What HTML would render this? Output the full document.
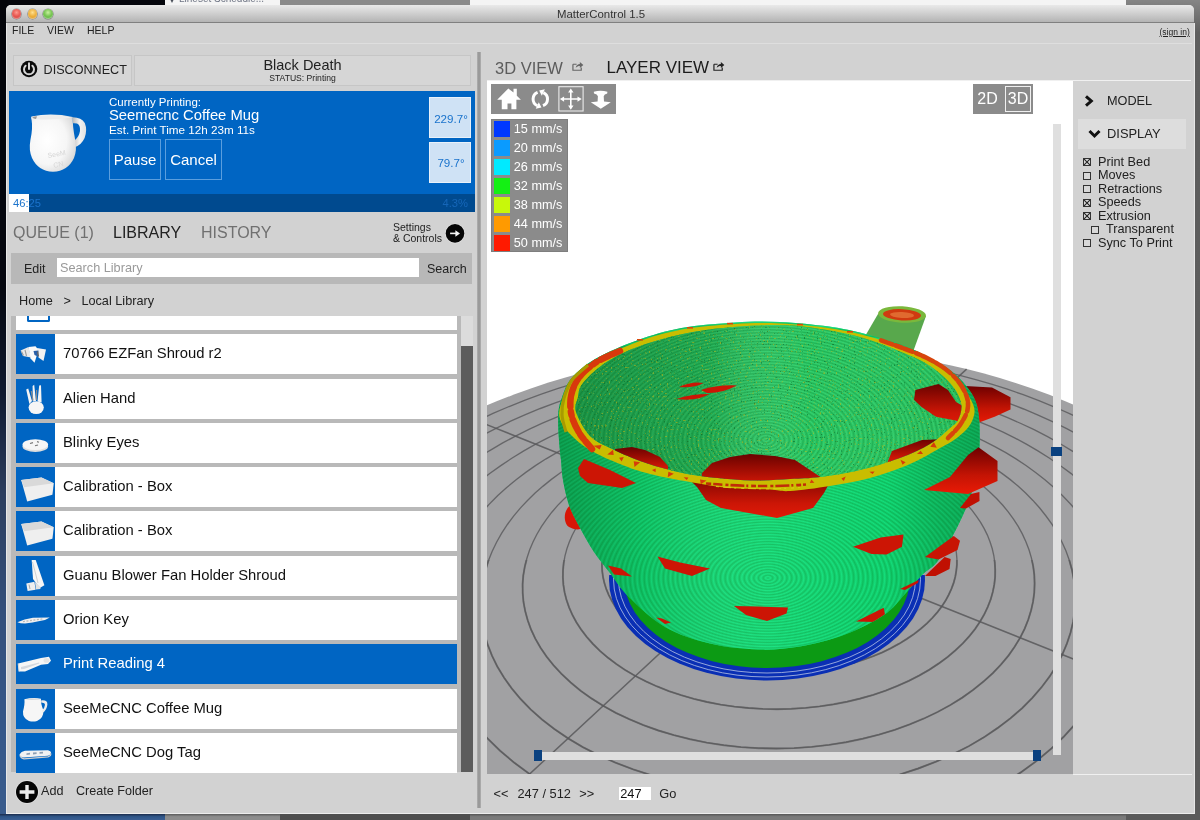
<!DOCTYPE html>
<html><head><meta charset="utf-8"><title>MatterControl 1.5</title>
<style>
*{box-sizing:border-box;margin:0;padding:0}
html,body{width:1200px;height:820px;overflow:hidden}
body{font-family:"Liberation Sans",sans-serif;background:#05060c;position:relative;color:#222}
.abs{position:absolute}
.t{position:absolute;white-space:pre;line-height:1}
/* desktop */
#desk-left{left:0;top:0;width:8px;height:820px;background:linear-gradient(#04050a 0%,#05070f 35%,#101a30 48%,#2c3e5e 60%,#34507c 75%,#36588a 90%,#3a5c8c 100%)}
#desk-bottom{left:0;top:812px;width:1200px;height:8px;background:#7b7b7b}
#win{left:6px;top:5.4px;width:1188.4px;height:808.6px;background:#d2d2d2;border-radius:5px 5px 0 0;overflow:hidden}
#titlebar{left:0;top:0;width:1189px;height:17.2px;background:linear-gradient(#e9e9e9,#d4d4d4 40%,#b4b4b4);border-bottom:1px solid #808080}
.tl{position:absolute;width:9.6px;height:9.6px;border-radius:50%;top:3.8px;box-shadow:0 0 0 .6px rgba(0,0,0,.35),inset 0 -1px 1.5px rgba(255,255,255,.5)}
/* list */
.row{position:absolute;left:16px;width:440.5px;height:39.5px;background:#fff}
.row .th{position:absolute;left:0;top:0;width:39px;height:39.5px;background:#0065c3}
.row .nm{position:absolute;left:47px;top:12.3px;font-size:14.8px;line-height:1;color:#111;white-space:pre}
.row.sel{background:#0065c3}.row.sel .nm{color:#fff}
.cb{position:absolute;font-size:12.7px;line-height:1;color:#222;white-space:pre}
.box{position:absolute;width:8px;height:8px;border:1px solid #333;background:#d8d8d8}
.lg{position:absolute;left:3.25px;width:16px;height:15.5px}
.lgt{position:absolute;left:22.8px;font-size:12.7px;line-height:1;color:#fff;white-space:pre}
#root{position:absolute;left:0;top:0;width:1200px;height:820px;will-change:transform;transform:translateZ(0)}
</style></head><body><div id="root">
<!-- desktop background pieces -->
<div class="abs" style="left:164.5px;top:0;width:115px;height:7px;background:#f4f4f4"></div>
<div class="abs" style="left:280px;top:0;width:190px;height:7px;background:#8a8a8a"></div>
<div class="abs" style="left:470px;top:0;width:656px;height:7px;background:#f4f4f4"></div>
<div class="abs" style="left:1126px;top:0;width:74px;height:820px;background:linear-gradient(#858585,#5e5e5e 4%,#5a5a5a)"></div>
<div class="abs" id="desk-left"></div>
<div class="abs" style="left:0;top:814px;width:165px;height:6px;background:linear-gradient(#1c2c4c,#2f5688 45%,#3a5e92)"></div>
<div class="abs" style="left:165px;top:814px;width:115px;height:6px;background:linear-gradient(#5a5a5a,#8c8c8c 45%)"></div>
<div class="abs" style="left:280px;top:814px;width:190px;height:6px;background:#4e4e4e"></div>
<div class="abs" style="left:470px;top:814px;width:656px;height:6px;background:linear-gradient(#555,#7a7a7a 45%)"></div>
<div class="abs" style="left:169.8px;top:-1.5px;width:0;height:0;border-left:2.3px solid transparent;border-right:2.3px solid transparent;border-top:4px solid #4a4f5a"></div><div class="t" style="left:179px;top:-6.2px;font-size:10px;color:#6e7484">Lineset Schedule...</div>

<div class="abs" id="win">
 <div class="abs" id="titlebar"></div>
 <div class="tl" style="left:5.7px;background:radial-gradient(circle at 50% 35%,#ff9a8f,#e0443e 60%,#b3261f)"></div>
 <div class="tl" style="left:21.5px;background:radial-gradient(circle at 50% 35%,#ffe08f,#e8a325 60%,#b97a12)"></div>
 <div class="tl" style="left:37.3px;background:radial-gradient(circle at 50% 35%,#c8f0a0,#5fb83a 60%,#3a8a22)"></div>
 <div class="t" style="left:1px;width:1188px;top:3.2px;text-align:center;font-size:11.4px;color:#333">MatterControl 1.5</div>
</div>

<!-- everything below uses page coordinates -->
<div class="t" style="left:12px;top:25px;font-size:10.5px;color:#222">FILE</div>
<div class="t" style="left:47px;top:25px;font-size:10.5px;color:#222">VIEW</div>
<div class="t" style="left:87px;top:25px;font-size:10.5px;color:#222">HELP</div>
<div class="t" style="left:1159.5px;top:27.7px;font-size:8.5px;color:#222;text-decoration:underline">(sign in)</div>
<div class="abs" style="left:9px;top:43px;width:1183px;height:1px;background:#dedede"></div>

<!-- top-left: disconnect + status -->
<div class="abs" style="left:13px;top:55px;width:119px;height:31px;border:1px solid #c6c6c6;background:#d6d6d6"></div>
<svg class="abs" style="left:19px;top:59.4px" width="20" height="20" viewBox="0 0 20 20"><circle cx="10" cy="10" r="8.3" fill="#0a0a0a"/><path d="M6.6 6.7A5 5 0 1 0 13.4 6.7" fill="none" stroke="#d6d6d6" stroke-width="2" stroke-linecap="round"/><path d="M10 4.2V10" stroke="#d6d6d6" stroke-width="2" stroke-linecap="round"/></svg>
<div class="t" style="left:43.6px;top:63.8px;font-size:12.6px;color:#222">DISCONNECT</div>
<div class="abs" style="left:134px;top:55px;width:337px;height:31px;border:1px solid #c6c6c6;background:#d6d6d6"></div>
<div class="t" style="left:134px;width:337px;top:58.4px;text-align:center;font-size:14.5px;color:#222">Black Death</div>
<div class="t" style="left:134px;width:337px;top:74px;text-align:center;font-size:8.6px;color:#222">STATUS: Printing</div>

<!-- blue print panel -->
<div class="abs" style="left:9px;top:91px;width:466px;height:103px;background:#0065c3"></div>
<div class="abs" style="left:9px;top:194px;width:466px;height:18px;background:#004a8f"></div>
<div class="abs" style="left:9px;top:194px;width:20px;height:18px;background:#fff"></div>
<div class="t" style="left:13px;top:197.6px;font-size:11.2px;color:#1a73cc">46:25</div>
<div class="t" style="left:442.5px;top:197.6px;font-size:11.2px;color:#1566b8">4.3%</div>
<div class="t" style="left:109px;top:96.6px;font-size:11.5px;color:#fff">Currently Printing:</div>
<div class="t" style="left:109px;top:108px;font-size:14.8px;color:#fff">Seemecnc Coffee Mug</div>
<div class="t" style="left:109px;top:124.3px;font-size:11.7px;color:#fff">Est. Print Time 12h 23m 11s</div>
<div class="abs" style="left:109px;top:139px;width:52px;height:41px;border:1px solid #5a9ede"></div>
<div class="t" style="left:109px;width:52px;top:151.6px;text-align:center;font-size:15px;color:#fff">Pause</div>
<div class="abs" style="left:165px;top:139px;width:57px;height:41px;border:1px solid #5a9ede"></div>
<div class="t" style="left:165px;width:57px;top:151.6px;text-align:center;font-size:15px;color:#fff">Cancel</div>
<div class="abs" style="left:429px;top:97px;width:42px;height:41px;background:#cfe2f5;border:1px solid #e8f1fa"></div>
<div class="t" style="left:430px;width:42px;top:113px;text-align:center;font-size:11.6px;color:#1a73cc">229.7&deg;</div>
<div class="abs" style="left:429px;top:142px;width:42px;height:41px;background:#cfe2f5;border:1px solid #e8f1fa"></div>
<div class="t" style="left:430px;width:42px;top:157px;text-align:center;font-size:11.6px;color:#1a73cc">79.7&deg;</div>
<svg class="abs" style="left:26px;top:108px" width="64" height="66" viewBox="0 0 64 66">
<defs><radialGradient id="mg" cx="38%" cy="45%" r="70%"><stop offset="0" stop-color="#ffffff"/><stop offset=".6" stop-color="#f6f6f6"/><stop offset=".9" stop-color="#dcdcdc"/><stop offset="1" stop-color="#c4c4c4"/></radialGradient>
<linearGradient id="mh" x1="0" y1="0" x2="1" y2="0"><stop offset="0" stop-color="#bdbdbd"/><stop offset=".5" stop-color="#f2f2f2"/><stop offset="1" stop-color="#e0e0e0"/></linearGradient></defs>
<path d="M46.8 9.2Q55.5 9.3 58.8 15Q61.6 22 58.6 30Q55.6 36.5 49.3 39L48.8 32.2Q53 29 54 23Q54.4 17 51 15.6Q49 15 47.1 15.2Z" fill="url(#mh)"/>
<path d="M5.4 8.4Q4.6 9.2 5.6 12Q7 20 4.4 32Q2.6 42 6 50Q12 63 27 63.8Q42 63 48 50Q51.2 42 49.2 32Q46.4 18 46.8 9Q26 4.4 5.4 8.4Z" fill="url(#mg)"/>
<path d="M6 9.2Q26 5.4 46.4 9.4Q26 12.6 9 11Z" fill="#ececec"/>
<path d="M6.2 9.4Q8.5 8.4 11 8.3L10 11Q7.5 10.8 6.2 9.4Z" fill="#9a9a9a"/>
<text x="22" y="50" font-family="Liberation Sans" font-size="7" fill="#d6d6d6" transform="rotate(-10 22 50)">SeeM</text>
<text x="28" y="60" font-family="Liberation Sans" font-size="7" fill="#d6d6d6" transform="rotate(-14 28 60)">CN</text>
</svg>

<!-- tabs -->
<div class="t" style="left:13px;top:225px;font-size:16px;color:#707070">QUEUE (1)</div>
<div class="t" style="left:113px;top:225px;font-size:16px;color:#222">LIBRARY</div>
<div class="t" style="left:201px;top:225px;font-size:16px;color:#707070">HISTORY</div>
<div class="t" style="left:393px;top:222.4px;font-size:10.5px;color:#222">Settings</div>
<div class="t" style="left:393px;top:233.3px;font-size:10.5px;color:#222">&amp; Controls</div>
<svg class="abs" style="left:445px;top:223px" width="20" height="21" viewBox="0 0 20 21"><circle cx="10" cy="10.4" r="10" fill="#e4e4e4"/><circle cx="10" cy="10.4" r="9.3" fill="#050505"/><path d="M5.1 10.4H11.5" stroke="#f4f4f4" stroke-width="1.6"/><path d="M10.4 7.2L15 10.4L10.4 13.7Z" fill="#f4f4f4"/></svg>

<!-- search row -->
<div class="abs" style="left:11px;top:253px;width:461px;height:31px;background:#b8b8b8"></div>
<div class="t" style="left:24px;top:263px;font-size:12.5px;color:#222">Edit</div>
<div class="abs" style="left:57px;top:258px;width:362px;height:19px;background:#fff"></div>
<div class="t" style="left:60px;top:261.8px;font-size:12.7px;color:#9a9a9a">Search Library</div>
<div class="t" style="left:427px;top:263px;font-size:12.5px;color:#222">Search</div>
<div class="t" style="left:19px;top:294.6px;font-size:12.7px;color:#222">Home   &gt;   Local Library</div>

<!-- list -->
<div class="abs" style="left:11px;top:316px;width:450px;height:456px;background:#b9b9b9"></div>
<div class="abs" style="left:16px;top:316px;width:440.5px;height:14px;background:#fff"></div>
<div class="abs" style="left:26.5px;top:316px;width:23.5px;height:5.5px;border:2px solid #0065c3;border-top:none;border-radius:0 0 2px 2px"></div>
<div class="row" style="top:334px"><div class="th"><svg width="40" height="40" viewBox="0 0 40 40" style="position:absolute;left:0;top:0"><path d="M4.6 16.5L12.5 13L15 23.5L7 22Z" fill="#e9e9e9"/><path d="M12.5 13L19.5 12.2L22.5 16L18.5 28.8L14.5 24.5Z" fill="#fafafa"/><path d="M21 14L30 15.5L27.5 27L22.5 23.5Z" fill="#f2f2f2"/><path d="M17.5 17L22.5 16.5L22 22.5L18.5 21Z" fill="#2a5fa8"/><path d="M5.5 17.5L7.5 21.5M9 16L10.5 22" stroke="#9a9a9a" stroke-width="1.1"/><path d="M21.5 17.5L22.5 22.5" stroke="#666" stroke-width="1.3"/></svg></div><div class="nm">70766 EZFan Shroud r2</div></div>
<div class="row" style="top:379px"><div class="th"><svg width="40" height="40" viewBox="0 0 40 40" style="position:absolute;left:0;top:0"><ellipse cx="20.2" cy="28.6" rx="7.6" ry="6.4" fill="#f6f6f6"/><path d="M13.4 25L10.2 10.5L12.2 9.4L16 22ZM16.8 22.5L16.6 7L18.2 5.8L20 22ZM21.5 22.5L23.2 6.5L25 6.2L25.6 23.5Z" fill="#f4f4f4"/><path d="M15.3 12L17 21.5M20.6 11L20.4 21" stroke="#8a8a8a" stroke-width="1.2"/></svg></div><div class="nm">Alien Hand</div></div>
<div class="row" style="top:423px"><div class="th"><svg width="40" height="40" viewBox="0 0 40 40" style="position:absolute;left:0;top:0"><ellipse cx="19.3" cy="23.4" rx="12.8" ry="5.6" fill="#dedede"/><ellipse cx="19.3" cy="21.6" rx="12.8" ry="5.4" fill="#f6f6f6"/><path d="M14 20.5L17 19.6M19 22.8L22 22M21 18.6L23 19.2" stroke="#777" stroke-width="1.1"/></svg></div><div class="nm">Blinky Eyes</div></div>
<div class="row" style="top:467px"><div class="th"><svg width="40" height="40" viewBox="0 0 40 40" style="position:absolute;left:0;top:0"><path d="M5.2 13L25.5 10.5L37.8 16.2L36.4 27.8L11.2 34.4Z" fill="#efefef"/><path d="M5.2 13L25.5 10.5L37.8 16.2L8 20.2Z" fill="#d9d9d9"/></svg></div><div class="nm">Calibration - Box</div></div>
<div class="row" style="top:511px"><div class="th"><svg width="40" height="40" viewBox="0 0 40 40" style="position:absolute;left:0;top:0"><path d="M5.2 13L25.5 10.5L37.8 16.2L36.4 27.8L11.2 34.4Z" fill="#efefef"/><path d="M5.2 13L25.5 10.5L37.8 16.2L8 20.2Z" fill="#d9d9d9"/></svg></div><div class="nm">Calibration - Box</div></div>
<div class="row" style="top:556px"><div class="th"><svg width="40" height="40" viewBox="0 0 40 40" style="position:absolute;left:0;top:0"><path d="M15.7 4L19.7 4L28.4 29.2L23.8 31.9L17 23Z" fill="#f6f6f6"/><path d="M10.3 27.6L18.4 25.7L19.7 33.8L11.6 35Z" fill="#efefef"/><path d="M19 26L24 30.5L24.5 33L20 33.6Z" fill="#e2e2e2"/><path d="M16.5 6L22 27" stroke="#d0d0d0" stroke-width="1"/><path d="M13 28.5L14 33" stroke="#aaa" stroke-width="1"/></svg></div><div class="nm">Guanu Blower Fan Holder Shroud</div></div>
<div class="row" style="top:600px"><div class="th"><svg width="40" height="40" viewBox="0 0 40 40" style="position:absolute;left:0;top:0"><path d="M1.4 22.2Q8 19 17 17.8L33.8 17.4Q30 20 25 20.8Q16 23 9 23.6Q4 23.6 1.4 22.2Z" fill="#f0f0f0"/><path d="M7 21.6L27 18.8" stroke="#b8b8b8" stroke-width="1.1" stroke-dasharray="2 1.5"/></svg></div><div class="nm">Orion Key</div></div>
<div class="row sel" style="top:644px"><div class="th"><svg width="40" height="40" viewBox="0 0 40 40" style="position:absolute;left:0;top:0"><path d="M2.2 19.5L25 14L33 12.7L35 16.8L32 20L25 20.8L9 27.6L3 27.6Z" fill="#f6f6f6"/><path d="M5 23L23 18.4L23.4 19.6L8 25L5 25.2Z" fill="#d4d8de"/><ellipse cx="30.5" cy="16.4" rx="3" ry="2.4" fill="#e4e4e4"/><path d="M2.2 19.5L3 27.6" stroke="#ddd" stroke-width="1"/></svg></div><div class="nm">Print Reading 4</div></div>
<div class="row" style="top:689px"><div class="th"><svg width="40" height="40" viewBox="0 0 40 40" style="position:absolute;left:0;top:0"><path d="M8.4 10.3Q17 8 25 9.7Q24.5 14 27.3 21Q28 29 21 32Q17 33 13 32Q6.5 29 7 22.4Q9 15 8.4 10.3Z" fill="#f6f6f6"/><path d="M25 11.4Q31.6 10.6 31.4 15.5Q30.8 21 26.8 24L26 21.4Q28.8 19 29 15.8Q28.8 13.2 25.4 13.8Z" fill="#ededed"/><path d="M9 10.6Q17 8.8 24.6 10.2Q17 11.6 9 10.6Z" fill="#d8d8d8"/></svg></div><div class="nm">SeeMeCNC Coffee Mug</div></div>
<div class="row" style="top:733px"><div class="th"><svg width="40" height="40" viewBox="0 0 40 40" style="position:absolute;left:0;top:0"><path d="M3.5 21.4Q5 18.4 9 17.8L32 17.3Q35.4 18 35 20Q34.6 22 32 22.7L7.6 24.6Q4 24.2 3.5 21.4Z" fill="#f2f2f2"/><path d="M10.5 20.2L14 19.8L14 21.6L10.5 22ZM17 19.6L20.6 19.3L20.6 21L17 21.4ZM23.5 19L27 18.8L27 20.4L23.5 20.8Z" fill="#8fa0b4"/><path d="M3.8 22.4Q5 25.6 8 25.8L32 23.8Q35 23 35 20.4" stroke="#cfcfcf" stroke-width="1.2" fill="none"/></svg></div><div class="nm">SeeMeCNC Dog Tag</div></div>
<div class="abs" style="left:461px;top:316px;width:12px;height:30px;background:#dcdcdc"></div>
<div class="abs" style="left:461px;top:346px;width:12px;height:426px;background:#5c5c5c"></div>

<!-- bottom-left -->
<svg class="abs" style="left:15.15px;top:779.5px" width="24" height="24" viewBox="0 0 24 24"><circle cx="12" cy="12" r="11.8" fill="#e2e2e2"/><circle cx="12" cy="12" r="11" fill="#050505"/><path d="M12 5V19M4.6 12H19.4" stroke="#ececec" stroke-width="3.4"/></svg>
<div class="t" style="left:41px;top:785px;font-size:12.6px;color:#222">Add</div>
<div class="t" style="left:76px;top:785px;font-size:12.6px;color:#222">Create Folder</div>

<!-- splitter -->
<div class="abs" style="left:477.2px;top:52px;width:3.5px;height:756px;background:linear-gradient(90deg,#b4b4b4,#9a9a9a 30%,#9a9a9a 70%,#b4b4b4)"></div>

<!-- right tabs -->
<div class="t" style="left:495px;top:59.5px;font-size:16.5px;color:#5c5c5c">3D VIEW</div>
<div class="t" style="left:606.5px;top:59.4px;font-size:17px;color:#1c1c1c">LAYER VIEW</div>
<svg class="abs" style="left:572px;top:61px" width="12" height="10.2" viewBox="0 0 13 11"><path d="M1 3.5H5M1 3.5V10H10V7" fill="none" stroke="#666" stroke-width="1.3"/><path d="M4 7.5C4.5 4.5 6.5 3.3 8.5 3.3V1L12.3 4.3L8.5 7.6V5.4C6.8 5.4 5.3 6 4 7.5Z" fill="#666"/></svg>
<svg class="abs" style="left:712.6px;top:61px" width="12" height="10.2" viewBox="0 0 13 11"><path d="M1 3.5H5M1 3.5V10H10V7" fill="none" stroke="#222" stroke-width="1.3"/><path d="M4 7.5C4.5 4.5 6.5 3.3 8.5 3.3V1L12.3 4.3L8.5 7.6V5.4C6.8 5.4 5.3 6 4 7.5Z" fill="#222"/></svg>
<div class="abs" style="left:487px;top:80px;width:704px;height:1px;background:#f0f0f0"></div>

<!-- view area -->
<div class="abs" style="left:487px;top:81px;width:586px;height:693px;background:#fff;overflow:hidden">
<svg width="586" height="693" viewBox="487 81 586 693" style="position:absolute;left:0;top:0">
<defs>
<radialGradient id="gi" gradientUnits="userSpaceOnUse" cx="0" cy="0" r="1.45" spreadMethod="reflect" gradientTransform="translate(766 440) scale(1.6 1)"><stop offset="0" stop-color="#1aa84c"/><stop offset="1" stop-color="#3cdc7a"/></radialGradient>
<radialGradient id="gb" gradientUnits="userSpaceOnUse" cx="0" cy="0" r="1.4" spreadMethod="reflect" gradientTransform="translate(768 578) scale(1.7 1)"><stop offset="0" stop-color="#0eb858"/><stop offset="1" stop-color="#16ea86"/></radialGradient>
<linearGradient id="shadeL" gradientUnits="userSpaceOnUse" x1="558" y1="0" x2="980" y2="0"><stop offset="0" stop-color="#003a10" stop-opacity=".36"/><stop offset=".2" stop-color="#003a10" stop-opacity=".12"/><stop offset=".5" stop-color="#fff" stop-opacity=".04"/><stop offset=".78" stop-color="#003a10" stop-opacity=".03"/><stop offset=".9" stop-color="#003a10" stop-opacity=".2"/><stop offset="1" stop-color="#003a10" stop-opacity=".3"/></linearGradient>
<linearGradient id="shadeI" gradientUnits="userSpaceOnUse" x1="577" y1="0" x2="963" y2="0"><stop offset="0" stop-color="#003a10" stop-opacity=".36"/><stop offset=".35" stop-color="#003a10" stop-opacity=".18"/><stop offset=".6" stop-color="#fff" stop-opacity="0"/><stop offset="1" stop-color="#003a10" stop-opacity=".05"/></linearGradient>
<linearGradient id="rd" x1="0" y1="0" x2="0" y2="1"><stop offset="0" stop-color="#6e0000"/><stop offset=".6" stop-color="#c41404"/><stop offset="1" stop-color="#ea1a06"/></linearGradient>
<linearGradient id="rd2" x1="0" y1="0" x2="0" y2="1"><stop offset="0" stop-color="#6a0200"/><stop offset=".7" stop-color="#cc1606"/><stop offset="1" stop-color="#e01a08"/></linearGradient>
<filter id="spk" x="0" y="0" width="100%" height="100%" color-interpolation-filters="sRGB"><feTurbulence type="fractalNoise" baseFrequency="0.55" numOctaves="1" seed="7" result="n"/><feColorMatrix in="n" type="matrix" values="0 0 0 0 0.82  0 0 0 0 0.72  0 0 0 0 0.05  9 0 0 0 -5.6"/></filter>
<filter id="spk2" x="0" y="0" width="100%" height="100%" color-interpolation-filters="sRGB"><feTurbulence type="fractalNoise" baseFrequency="0.7" numOctaves="1" seed="11" result="n"/><feColorMatrix in="n" type="matrix" values="0 0 0 0 0.02  0 0 0 0 0.35  0 0 0 0 0.12  0 8 0 0 -5.1"/></filter>
<clipPath id="cint"><path d="M576.0 412.0 C574.0 405.7 576.6 402.8 577.8 398.0 C579.0 393.2 577.9 389.2 583.0 383.0 C588.1 376.8 597.2 367.7 608.3 361.0 C619.4 354.3 632.7 348.0 649.8 342.7 C666.9 337.4 689.0 332.2 710.7 329.3 C732.4 326.4 760.1 324.8 780.0 325.0 C799.9 325.2 815.3 328.1 830.0 330.5 C844.7 332.9 855.5 335.7 868.0 339.5 C880.5 343.3 895.3 349.5 905.0 353.5 C914.7 357.5 919.5 359.6 926.0 363.5 C932.5 367.4 939.0 372.4 944.0 377.0 C949.0 381.6 953.1 386.2 956.0 391.0 C958.9 395.8 961.2 401.2 961.5 406.0 C961.8 410.8 959.9 416.3 958.0 420.0 C956.1 423.7 954.7 424.0 950.0 428.0 C945.3 432.0 938.3 439.0 930.0 444.0 C921.7 449.0 911.7 453.7 900.0 458.0 C888.3 462.3 873.3 466.8 860.0 470.0 C846.7 473.2 831.7 475.5 820.0 477.0 C808.3 478.5 801.7 478.4 790.0 479.0 C778.3 479.6 765.0 481.0 750.0 480.5 C735.0 480.0 713.3 477.8 700.0 476.0 C686.7 474.2 680.0 472.5 670.0 470.0 C660.0 467.5 650.0 464.7 640.0 461.0 C630.0 457.3 618.3 452.2 610.0 448.0 C601.7 443.8 595.7 442.0 590.0 436.0 C584.3 430.0 578.0 418.3 576.0 412.0Z"/></clipPath>
<clipPath id="cbody"><path d="M558.3 414.0 C557.8 421.1 558.5 432.3 559.0 440.0 C559.5 447.7 560.3 453.3 561.0 460.0 C561.7 466.7 561.7 472.5 563.0 480.0 C564.3 487.5 566.3 497.3 569.0 505.0 C571.7 512.7 574.8 518.2 579.0 526.0 C583.2 533.8 588.8 544.2 594.0 552.0 C599.2 559.8 604.2 565.5 610.0 573.0 C615.8 580.5 619.8 588.0 629.0 597.0 C638.2 606.0 651.5 619.2 665.0 627.0 C678.5 634.8 694.5 639.8 710.0 643.5 C725.5 647.2 743.0 649.0 758.0 649.5 C773.0 650.0 785.5 649.0 800.0 646.5 C814.5 644.0 831.0 639.8 845.0 634.5 C859.0 629.2 874.0 621.8 884.0 615.0 C894.0 608.2 898.7 600.7 905.0 594.0 C911.3 587.3 916.7 580.3 922.0 575.0 C927.3 569.7 932.0 568.3 937.0 562.0 C942.0 555.7 947.7 544.8 952.0 537.0 C956.3 529.2 959.8 522.0 963.0 515.0 C966.2 508.0 968.7 502.5 971.0 495.0 C973.3 487.5 975.6 478.2 977.0 470.0 C978.4 461.8 979.2 454.7 979.5 446.0 C979.8 437.3 979.8 425.7 979.0 418.0 C978.2 410.3 977.3 405.5 975.0 400.0 C972.7 394.5 969.4 389.9 965.4 385.0 C961.4 380.1 957.2 375.4 950.7 370.5 C944.2 365.6 934.4 360.1 926.3 355.9 C918.2 351.6 912.1 348.6 902.0 345.0 C891.9 341.4 877.6 337.1 865.4 334.0 C853.2 330.9 843.0 328.6 828.8 326.6 C814.6 324.6 795.6 322.7 780.0 322.0 C764.4 321.3 751.4 321.4 735.0 322.4 C718.6 323.4 697.7 325.0 681.5 328.0 C665.3 331.0 651.9 335.1 637.6 340.2 C623.4 345.3 607.0 352.2 596.0 358.5 C585.0 364.8 577.4 371.5 571.7 378.0 C566.0 384.5 564.2 391.6 562.0 397.6 C559.8 403.6 558.8 406.9 558.3 414.0Z"/></clipPath>
</defs>
<path d="M1351.4 770.1 L1349.3 796.6 L1344.8 823.8 L1337.5 851.7 L1327.3 880.1 L1313.9 908.8 L1297.2 937.7 L1277.0 966.5 L1253.1 995.0 L1225.3 1022.8 L1193.8 1049.5 L1158.4 1074.9 L1119.3 1098.6 L1076.7 1120.2 L1030.8 1139.3 L982.1 1155.6 L930.9 1168.7 L877.7 1178.4 L823.3 1184.5 L768.2 1186.8 L713.1 1185.3 L658.7 1180.1 L605.6 1171.2 L554.5 1158.8 L505.8 1143.1 L460.0 1124.6 L417.6 1103.4 L378.7 1080.1 L343.6 1054.9 L312.4 1028.2 L285.2 1000.5 L261.8 972.0 L242.1 943.1 L226.1 914.0 L213.5 885.0 L204.1 856.3 L197.7 828.1 L194.1 800.6 L192.9 773.8 L194.1 747.9 L197.3 722.9 L202.4 698.8 L209.1 675.7 L217.3 653.7 L226.8 632.6 L237.4 612.6 L249.0 593.6 L261.5 575.5 L274.7 558.4 L288.6 542.2 L303.0 526.8 L317.9 512.4 L333.2 498.7 L348.9 485.9 L364.8 473.8 L380.9 462.5 L397.3 451.8 L413.8 441.8 L430.5 432.4 L447.2 423.7 L464.0 415.5 L480.9 407.9 L497.8 400.8 L514.7 394.3 L531.6 388.2 L548.5 382.6 L565.5 377.5 L582.4 372.8 L599.3 368.6 L616.2 364.7 L633.0 361.3 L649.9 358.2 L666.7 355.6 L683.5 353.3 L700.2 351.4 L717.0 349.8 L733.7 348.6 L750.4 347.8 L767.1 347.3 L783.7 347.1 L800.4 347.3 L817.0 347.9 L833.7 348.8 L850.3 350.0 L866.9 351.6 L883.6 353.6 L900.2 355.9 L916.8 358.6 L933.4 361.7 L950.0 365.2 L966.6 369.1 L983.2 373.3 L999.8 378.0 L1016.4 383.2 L1032.9 388.8 L1049.4 394.8 L1065.9 401.4 L1082.3 408.4 L1098.7 416.0 L1115.0 424.1 L1131.1 432.9 L1147.2 442.2 L1163.0 452.1 L1178.7 462.7 L1194.2 473.9 L1209.4 485.9 L1224.3 498.6 L1238.8 512.1 L1252.8 526.4 L1266.4 541.6 L1279.4 557.6 L1291.7 574.5 L1303.2 592.3 L1313.9 611.1 L1323.5 630.9 L1332.0 651.6 L1339.2 673.4 L1344.9 696.1 L1349.0 719.8 L1351.2 744.5Z" fill="#a1a1a3"/>
<defs><path id="rg" d="M805.4 551.9 L804.5 552.8 L803.6 553.5 L802.5 554.3 L801.4 555.0 L800.3 555.7 L799.1 556.4 L797.8 557.0 L796.5 557.6 L795.2 558.1 L793.8 558.6 L792.3 559.0 L790.8 559.4 L789.3 559.7 L787.8 560.0 L786.2 560.3 L784.6 560.4 L783.0 560.6 L781.4 560.7 L779.8 560.7 L778.2 560.7 L776.6 560.6 L775.0 560.5 L773.4 560.3 L771.8 560.0 L770.3 559.7 L768.8 559.4 L767.3 559.0 L765.9 558.6 L764.5 558.1 L763.2 557.6 L761.9 557.0 L760.6 556.4 L759.5 555.7 L758.3 555.1 L757.3 554.3 L756.3 553.6 L755.4 552.8 L754.5 552.0 L753.7 551.1 L753.0 550.3 L752.4 549.4 L751.9 548.5 L751.4 547.6 L751.0 546.6 L750.7 545.7 L750.5 544.7 L750.4 543.8 L750.3 542.8 L750.3 541.9 L750.5 540.9 L750.6 540.0 L750.9 539.0 L751.3 538.1 L751.7 537.2 L752.2 536.3 L752.8 535.4 L753.4 534.6 L754.1 533.7 L754.9 532.9 L755.8 532.1 L756.7 531.4 L757.7 530.6 L758.7 529.9 L759.8 529.3 L760.9 528.6 L762.1 528.1 L763.3 527.5 L764.6 527.0 L765.9 526.5 L767.3 526.1 L768.7 525.7 L770.1 525.3 L771.5 525.0 L773.0 524.8 L774.5 524.6 L775.9 524.4 L777.4 524.3 L779.0 524.2 L780.5 524.2 L782.0 524.2 L783.5 524.3 L785.0 524.4 L786.5 524.6 L787.9 524.8 L789.4 525.0 L790.8 525.3 L792.2 525.7 L793.6 526.1 L794.9 526.5 L796.2 527.0 L797.5 527.5 L798.7 528.0 L799.8 528.6 L801.0 529.2 L802.0 529.9 L803.0 530.6 L804.0 531.3 L804.9 532.1 L805.7 532.9 L806.4 533.7 L807.1 534.5 L807.7 535.4 L808.3 536.3 L808.7 537.2 L809.1 538.1 L809.5 539.0 L809.7 539.9 L809.8 540.9 L809.9 541.8 L809.9 542.8 L809.8 543.7 L809.6 544.7 L809.4 545.6 L809.1 546.6 L808.6 547.5 L808.1 548.4 L807.6 549.3 L806.9 550.2 L806.2 551.1ZM837.2 564.7 L835.3 566.6 L833.3 568.4 L831.0 570.2 L828.7 571.9 L826.1 573.5 L823.4 575.0 L820.6 576.5 L817.7 577.8 L814.6 579.1 L811.4 580.2 L808.1 581.3 L804.7 582.2 L801.2 583.0 L797.7 583.7 L794.1 584.3 L790.4 584.7 L786.8 585.0 L783.1 585.2 L779.3 585.3 L775.6 585.3 L771.9 585.1 L768.2 584.7 L764.6 584.3 L761.0 583.7 L757.5 583.1 L754.1 582.2 L750.7 581.3 L747.4 580.3 L744.3 579.1 L741.2 577.9 L738.3 576.5 L735.6 575.1 L732.9 573.6 L730.4 571.9 L728.1 570.3 L726.0 568.5 L724.0 566.7 L722.1 564.8 L720.5 562.8 L719.0 560.8 L717.8 558.8 L716.7 556.7 L715.8 554.6 L715.0 552.5 L714.5 550.4 L714.1 548.3 L714.0 546.1 L714.0 544.0 L714.2 541.9 L714.6 539.8 L715.1 537.7 L715.8 535.7 L716.7 533.6 L717.8 531.6 L719.0 529.7 L720.4 527.8 L721.9 525.9 L723.6 524.2 L725.4 522.4 L727.3 520.7 L729.4 519.1 L731.6 517.6 L733.9 516.1 L736.3 514.7 L738.8 513.4 L741.4 512.2 L744.1 511.0 L746.9 510.0 L749.7 509.0 L752.6 508.1 L755.6 507.3 L758.7 506.6 L761.7 506.0 L764.9 505.5 L768.0 505.0 L771.2 504.7 L774.4 504.4 L777.6 504.3 L780.8 504.3 L784.0 504.3 L787.3 504.4 L790.4 504.7 L793.6 505.0 L796.8 505.4 L799.9 506.0 L802.9 506.6 L805.9 507.3 L808.9 508.1 L811.7 509.0 L814.6 510.0 L817.3 511.0 L819.9 512.2 L822.5 513.4 L825.0 514.7 L827.3 516.1 L829.5 517.6 L831.7 519.1 L833.7 520.7 L835.5 522.4 L837.3 524.1 L838.9 525.9 L840.3 527.7 L841.6 529.6 L842.8 531.6 L843.8 533.6 L844.6 535.6 L845.2 537.6 L845.7 539.7 L846.0 541.8 L846.1 543.9 L846.1 546.1 L845.8 548.2 L845.4 550.3 L844.8 552.4 L844.0 554.5 L843.0 556.6 L841.8 558.7 L840.5 560.7 L838.9 562.7ZM870.5 578.0 L867.7 581.0 L864.6 584.0 L861.2 586.9 L857.5 589.7 L853.6 592.4 L849.4 594.9 L845.0 597.3 L840.3 599.5 L835.5 601.6 L830.4 603.6 L825.2 605.3 L819.7 606.9 L814.2 608.2 L808.5 609.4 L802.7 610.4 L796.8 611.1 L790.8 611.7 L784.9 612.0 L778.8 612.1 L772.8 612.0 L766.8 611.7 L760.9 611.2 L755.0 610.4 L749.3 609.5 L743.6 608.3 L738.1 607.0 L732.7 605.4 L727.5 603.7 L722.5 601.8 L717.7 599.7 L713.1 597.5 L708.8 595.1 L704.7 592.5 L700.9 589.9 L697.3 587.1 L694.0 584.2 L691.0 581.2 L688.3 578.1 L685.8 575.0 L683.7 571.8 L681.9 568.5 L680.4 565.2 L679.2 561.9 L678.2 558.6 L677.6 555.2 L677.3 551.9 L677.2 548.5 L677.5 545.2 L678.0 541.9 L678.8 538.7 L679.9 535.5 L681.2 532.3 L682.7 529.2 L684.6 526.2 L686.6 523.2 L688.9 520.4 L691.4 517.6 L694.1 514.9 L696.9 512.3 L700.0 509.8 L703.3 507.4 L706.7 505.2 L710.3 503.0 L714.0 501.0 L717.9 499.0 L721.9 497.2 L726.0 495.6 L730.2 494.0 L734.5 492.6 L738.9 491.3 L743.4 490.1 L748.0 489.1 L752.6 488.2 L757.3 487.4 L762.0 486.8 L766.8 486.3 L771.6 486.0 L776.4 485.8 L781.2 485.7 L786.0 485.8 L790.8 486.0 L795.5 486.3 L800.3 486.8 L805.0 487.4 L809.6 488.2 L814.2 489.1 L818.7 490.1 L823.2 491.3 L827.5 492.6 L831.8 494.0 L835.9 495.5 L840.0 497.2 L843.9 499.0 L847.7 500.9 L851.3 503.0 L854.8 505.1 L858.1 507.4 L861.3 509.8 L864.3 512.3 L867.1 514.9 L869.6 517.5 L872.0 520.3 L874.2 523.2 L876.1 526.1 L877.8 529.1 L879.2 532.2 L880.4 535.4 L881.4 538.5 L882.0 541.8 L882.4 545.1 L882.6 548.4 L882.4 551.7 L881.9 555.1 L881.2 558.4 L880.2 561.7 L878.8 565.1 L877.2 568.4 L875.2 571.6 L873.0 574.8ZM905.3 591.9 L901.6 596.2 L897.6 600.5 L893.1 604.6 L888.2 608.6 L882.9 612.5 L877.2 616.2 L871.1 619.6 L864.7 622.9 L858.0 626.0 L851.0 628.8 L843.6 631.4 L836.1 633.7 L828.2 635.7 L820.2 637.4 L812.1 638.8 L803.7 640.0 L795.3 640.8 L786.8 641.3 L778.3 641.5 L769.8 641.3 L761.3 640.8 L752.9 640.1 L744.6 639.0 L736.5 637.5 L728.5 635.8 L720.7 633.8 L713.2 631.6 L706.0 629.0 L699.0 626.2 L692.4 623.2 L686.1 619.9 L680.1 616.4 L674.6 612.8 L669.4 608.9 L664.6 604.9 L660.2 600.8 L656.3 596.5 L652.8 592.2 L649.7 587.7 L647.0 583.2 L644.8 578.6 L643.0 574.0 L641.6 569.4 L640.6 564.7 L640.1 560.1 L639.9 555.5 L640.2 550.9 L640.8 546.4 L641.8 541.9 L643.2 537.5 L644.9 533.2 L646.9 529.0 L649.3 524.9 L652.0 520.9 L654.9 516.9 L658.2 513.2 L661.7 509.5 L665.5 506.0 L669.5 502.6 L673.8 499.3 L678.3 496.3 L682.9 493.3 L687.8 490.5 L692.8 487.9 L698.0 485.4 L703.4 483.1 L708.9 480.9 L714.5 479.0 L720.2 477.1 L726.1 475.5 L732.0 474.0 L738.0 472.7 L744.1 471.6 L750.3 470.6 L756.4 469.9 L762.7 469.2 L768.9 468.8 L775.2 468.5 L781.5 468.5 L787.8 468.5 L794.0 468.8 L800.3 469.3 L806.5 469.9 L812.6 470.6 L818.7 471.6 L824.8 472.7 L830.7 474.0 L836.6 475.5 L842.3 477.2 L848.0 479.0 L853.5 481.0 L858.9 483.1 L864.2 485.4 L869.3 487.9 L874.2 490.5 L878.9 493.3 L883.5 496.2 L887.8 499.3 L891.9 502.6 L895.8 505.9 L899.4 509.4 L902.8 513.1 L905.9 516.9 L908.7 520.8 L911.3 524.8 L913.5 528.9 L915.3 533.1 L916.9 537.4 L918.1 541.8 L918.9 546.2 L919.3 550.7 L919.4 555.3 L919.1 559.9 L918.4 564.5 L917.2 569.1 L915.7 573.7 L913.7 578.3 L911.4 582.9 L908.5 587.4ZM941.8 606.4 L937.4 612.2 L932.4 617.9 L926.9 623.4 L920.8 628.8 L914.1 634.0 L906.9 638.9 L899.2 643.7 L891.0 648.1 L882.4 652.3 L873.3 656.2 L863.7 659.7 L853.8 662.8 L843.6 665.6 L833.1 668.0 L822.3 670.0 L811.3 671.6 L800.2 672.7 L789.0 673.4 L777.7 673.6 L766.4 673.4 L755.2 672.8 L744.1 671.7 L733.2 670.2 L722.5 668.2 L712.0 665.9 L701.8 663.1 L692.0 660.0 L682.6 656.5 L673.6 652.7 L665.0 648.5 L656.9 644.1 L649.4 639.4 L642.3 634.4 L635.8 629.2 L629.9 623.9 L624.5 618.3 L619.7 612.7 L615.5 606.9 L611.9 601.0 L608.8 595.1 L606.3 589.1 L604.4 583.1 L603.0 577.0 L602.2 571.0 L601.9 565.1 L602.1 559.2 L602.8 553.4 L603.9 547.6 L605.6 542.0 L607.6 536.4 L610.1 531.0 L613.0 525.7 L616.3 520.6 L620.0 515.6 L624.0 510.8 L628.3 506.1 L632.9 501.6 L637.9 497.3 L643.1 493.2 L648.6 489.3 L654.3 485.5 L660.2 482.0 L666.4 478.6 L672.7 475.4 L679.2 472.5 L685.9 469.7 L692.7 467.1 L699.7 464.8 L706.8 462.6 L714.0 460.7 L721.3 458.9 L728.7 457.4 L736.1 456.0 L743.7 454.9 L751.2 454.0 L758.8 453.3 L766.5 452.8 L774.1 452.5 L781.8 452.4 L789.4 452.5 L797.1 452.8 L804.7 453.3 L812.3 454.0 L819.8 454.9 L827.3 456.1 L834.7 457.4 L842.0 459.0 L849.2 460.7 L856.3 462.7 L863.3 464.8 L870.1 467.2 L876.8 469.7 L883.4 472.5 L889.8 475.5 L896.0 478.6 L902.0 482.0 L907.7 485.5 L913.3 489.3 L918.6 493.2 L923.6 497.3 L928.3 501.6 L932.8 506.1 L936.9 510.7 L940.7 515.5 L944.2 520.5 L947.2 525.6 L949.9 530.8 L952.2 536.2 L954.0 541.7 L955.5 547.4 L956.4 553.1 L956.9 558.9 L956.9 564.8 L956.3 570.7 L955.3 576.7 L953.7 582.7 L951.5 588.7 L948.8 594.6 L945.6 600.6ZM980.0 621.7 L975.0 629.1 L969.2 636.3 L962.8 643.4 L955.5 650.3 L947.6 657.0 L938.9 663.4 L929.5 669.6 L919.5 675.4 L908.8 680.9 L897.5 685.9 L885.7 690.6 L873.3 694.8 L860.4 698.5 L847.2 701.7 L833.6 704.3 L819.7 706.4 L805.6 707.9 L791.4 708.8 L777.0 709.2 L762.7 708.9 L748.5 708.0 L734.5 706.6 L720.6 704.6 L707.1 702.0 L693.9 698.9 L681.1 695.2 L668.8 691.1 L657.1 686.5 L645.9 681.4 L635.4 676.0 L625.5 670.2 L616.3 664.0 L607.8 657.6 L600.0 650.9 L593.0 644.0 L586.7 636.9 L581.2 629.7 L576.4 622.3 L572.4 614.9 L569.1 607.4 L566.5 599.9 L564.6 592.4 L563.4 584.9 L562.9 577.5 L563.0 570.2 L563.7 562.9 L565.0 555.8 L566.9 548.8 L569.3 542.0 L572.2 535.3 L575.6 528.8 L579.5 522.5 L583.8 516.4 L588.6 510.5 L593.7 504.8 L599.2 499.3 L605.0 494.0 L611.1 489.0 L617.6 484.2 L624.3 479.6 L631.3 475.2 L638.5 471.1 L645.9 467.2 L653.5 463.6 L661.3 460.2 L669.3 457.0 L677.4 454.1 L685.7 451.4 L694.1 448.9 L702.6 446.7 L711.2 444.7 L719.9 443.0 L728.7 441.4 L737.5 440.2 L746.3 439.1 L755.2 438.3 L764.2 437.7 L773.1 437.4 L782.1 437.3 L791.0 437.4 L799.9 437.8 L808.8 438.3 L817.7 439.2 L826.5 440.2 L835.3 441.5 L843.9 443.0 L852.5 444.8 L861.0 446.8 L869.4 449.0 L877.7 451.5 L885.8 454.1 L893.8 457.1 L901.6 460.2 L909.3 463.6 L916.7 467.3 L924.0 471.2 L931.0 475.3 L937.7 479.6 L944.2 484.2 L950.5 489.0 L956.4 494.0 L962.0 499.2 L967.2 504.7 L972.1 510.4 L976.5 516.3 L980.6 522.3 L984.2 528.6 L987.4 535.1 L990.0 541.7 L992.2 548.5 L993.8 555.5 L994.8 562.6 L995.2 569.8 L995.1 577.1 L994.3 584.4 L992.8 591.9 L990.7 599.4 L987.8 606.8 L984.3 614.3ZM1020.1 637.8 L1014.6 646.8 L1008.3 655.8 L1000.9 664.6 L992.7 673.2 L983.5 681.6 L973.3 689.8 L962.3 697.6 L950.4 705.0 L937.6 712.0 L924.0 718.5 L909.7 724.4 L894.7 729.8 L879.0 734.6 L862.8 738.7 L846.1 742.2 L829.0 744.9 L811.6 746.9 L794.0 748.1 L776.3 748.5 L758.7 748.2 L741.1 747.1 L723.8 745.2 L706.7 742.6 L690.1 739.2 L673.9 735.2 L658.4 730.5 L643.4 725.1 L629.2 719.2 L615.8 712.8 L603.2 705.8 L591.4 698.4 L580.6 690.7 L570.7 682.5 L561.7 674.1 L553.7 665.5 L546.6 656.6 L540.5 647.7 L535.3 638.6 L531.0 629.4 L527.7 620.3 L525.2 611.1 L523.5 602.0 L522.7 593.0 L522.6 584.1 L523.3 575.3 L524.8 566.7 L526.9 558.3 L529.6 550.0 L533.0 542.0 L536.9 534.2 L541.4 526.6 L546.4 519.3 L551.8 512.2 L557.7 505.4 L564.1 498.9 L570.8 492.6 L577.8 486.6 L585.2 480.9 L592.9 475.4 L600.9 470.2 L609.2 465.3 L617.6 460.7 L626.3 456.4 L635.2 452.3 L644.3 448.5 L653.6 444.9 L663.0 441.7 L672.5 438.7 L682.1 436.0 L691.9 433.5 L701.7 431.3 L711.6 429.4 L721.6 427.7 L731.7 426.3 L741.7 425.2 L751.9 424.3 L762.0 423.6 L772.2 423.3 L782.3 423.1 L792.5 423.3 L802.6 423.7 L812.7 424.3 L822.8 425.2 L832.8 426.4 L842.8 427.8 L852.7 429.5 L862.5 431.4 L872.2 433.6 L881.8 436.1 L891.3 438.8 L900.7 441.8 L909.9 445.1 L919.0 448.6 L927.9 452.4 L936.6 456.5 L945.0 460.8 L953.3 465.4 L961.3 470.3 L969.0 475.5 L976.4 480.9 L983.6 486.6 L990.3 492.6 L996.8 498.8 L1002.8 505.3 L1008.4 512.1 L1013.5 519.1 L1018.2 526.4 L1022.3 533.9 L1025.9 541.7 L1029.0 549.7 L1031.4 557.9 L1033.2 566.3 L1034.3 574.8 L1034.6 583.5 L1034.3 592.4 L1033.1 601.4 L1031.1 610.4 L1028.3 619.5 L1024.7 628.6ZM1062.3 654.6 L1056.5 665.6 L1049.7 676.4 L1041.6 687.2 L1032.4 697.8 L1022.1 708.2 L1010.5 718.2 L997.8 727.9 L984.0 737.2 L969.1 746.0 L953.1 754.1 L936.1 761.7 L918.2 768.5 L899.5 774.6 L880.0 779.9 L859.9 784.3 L839.3 787.7 L818.2 790.3 L796.9 791.8 L775.5 792.4 L754.1 792.0 L732.8 790.6 L711.8 788.2 L691.3 784.8 L671.2 780.6 L651.8 775.4 L633.2 769.4 L615.4 762.7 L598.6 755.2 L582.8 747.1 L568.1 738.4 L554.4 729.1 L542.0 719.5 L530.7 709.4 L520.6 699.0 L511.7 688.4 L504.0 677.6 L497.4 666.7 L492.0 655.7 L487.7 644.7 L484.5 633.7 L482.3 622.8 L481.1 612.0 L480.8 601.3 L481.5 590.8 L483.0 580.6 L485.3 570.6 L488.4 560.8 L492.2 551.3 L496.7 542.0 L501.7 533.1 L507.4 524.5 L513.6 516.1 L520.3 508.1 L527.5 500.5 L535.1 493.1 L543.1 486.1 L551.4 479.4 L560.1 473.0 L569.1 467.0 L578.4 461.2 L587.9 455.8 L597.7 450.7 L607.6 446.0 L617.8 441.5 L628.1 437.3 L638.6 433.5 L649.2 429.9 L659.9 426.7 L670.8 423.7 L681.7 421.1 L692.7 418.7 L703.8 416.6 L715.0 414.8 L726.2 413.3 L737.4 412.0 L748.7 411.1 L760.0 410.4 L771.3 410.0 L782.6 409.9 L793.9 410.0 L805.1 410.4 L816.4 411.1 L827.6 412.1 L838.8 413.4 L849.9 414.9 L860.9 416.7 L871.9 418.8 L882.8 421.2 L893.6 423.9 L904.3 426.8 L914.8 430.1 L925.2 433.7 L935.5 437.5 L945.6 441.7 L955.5 446.1 L965.2 450.9 L974.7 456.0 L983.9 461.3 L992.9 467.1 L1001.6 473.1 L1010.0 479.4 L1018.0 486.1 L1025.6 493.1 L1032.9 500.4 L1039.7 508.0 L1046.0 516.0 L1051.9 524.2 L1057.2 532.8 L1061.8 541.7 L1065.9 550.8 L1069.3 560.3 L1072.0 570.0 L1073.9 580.0 L1075.0 590.2 L1075.3 600.6 L1074.7 611.1 L1073.1 621.9 L1070.5 632.7 L1066.9 643.6ZM1106.7 672.3 L1100.8 685.4 L1093.7 698.4 L1085.1 711.4 L1075.1 724.2 L1063.7 736.8 L1050.8 749.1 L1036.5 761.0 L1020.8 772.4 L1003.6 783.3 L985.1 793.5 L965.4 802.9 L944.4 811.5 L922.3 819.1 L899.3 825.7 L875.4 831.3 L850.8 835.7 L825.7 838.9 L800.2 840.9 L774.6 841.6 L749.0 841.1 L723.5 839.3 L698.5 836.3 L674.0 832.1 L650.2 826.7 L627.2 820.2 L605.3 812.7 L584.4 804.2 L564.8 794.9 L546.5 784.8 L529.6 774.0 L514.1 762.6 L500.1 750.7 L487.5 738.4 L476.4 725.8 L466.8 712.9 L458.6 699.9 L451.8 686.8 L446.3 673.7 L442.2 660.6 L439.4 647.7 L437.7 634.9 L437.2 622.3 L437.8 609.9 L439.4 597.8 L441.9 585.9 L445.3 574.4 L449.6 563.3 L454.6 552.5 L460.3 542.0 L466.7 532.0 L473.7 522.3 L481.2 513.0 L489.3 504.1 L497.8 495.6 L506.7 487.5 L516.1 479.7 L525.8 472.4 L535.8 465.4 L546.1 458.8 L556.7 452.6 L567.5 446.7 L578.5 441.2 L589.7 436.0 L601.1 431.2 L612.7 426.7 L624.3 422.6 L636.1 418.8 L648.0 415.3 L660.0 412.1 L672.1 409.3 L684.3 406.7 L696.5 404.5 L708.7 402.6 L721.0 401.0 L733.4 399.7 L745.7 398.7 L758.1 397.9 L770.4 397.5 L782.8 397.4 L795.2 397.5 L807.5 398.0 L819.8 398.7 L832.1 399.8 L844.4 401.1 L856.6 402.7 L868.7 404.7 L880.8 406.9 L892.8 409.5 L904.7 412.3 L916.5 415.5 L928.2 419.0 L939.8 422.8 L951.2 426.9 L962.5 431.4 L973.6 436.2 L984.6 441.4 L995.3 446.9 L1005.8 452.7 L1016.0 458.9 L1026.0 465.5 L1035.6 472.5 L1044.9 479.8 L1053.9 487.5 L1062.4 495.5 L1070.5 504.0 L1078.1 512.8 L1085.3 522.1 L1091.8 531.7 L1097.7 541.7 L1103.0 552.0 L1107.5 562.7 L1111.3 573.8 L1114.3 585.2 L1116.3 596.9 L1117.4 608.9 L1117.5 621.2 L1116.6 633.8 L1114.5 646.5 L1111.2 659.4ZM1153.4 691.0 L1147.8 706.4 L1140.5 721.8 L1131.6 737.3 L1121.1 752.6 L1108.7 767.8 L1094.7 782.6 L1078.8 797.1 L1061.1 811.1 L1041.7 824.4 L1020.6 837.0 L997.8 848.7 L973.5 859.3 L947.8 868.9 L920.9 877.2 L892.8 884.2 L863.8 889.7 L834.1 893.8 L804.0 896.3 L773.6 897.2 L743.2 896.6 L713.1 894.3 L683.4 890.5 L654.5 885.2 L626.5 878.5 L599.7 870.4 L574.1 861.0 L550.0 850.5 L527.4 838.9 L506.5 826.4 L487.3 813.2 L470.0 799.2 L454.4 784.8 L440.7 769.9 L428.7 754.7 L418.6 739.3 L410.1 723.7 L403.3 708.2 L398.1 692.8 L394.5 677.4 L392.3 662.3 L391.4 647.4 L391.9 632.9 L393.5 618.7 L396.2 604.8 L400.0 591.4 L404.7 578.4 L410.3 565.8 L416.8 553.7 L423.9 542.1 L431.7 530.9 L440.2 520.2 L449.2 509.9 L458.7 500.1 L468.6 490.8 L479.0 482.0 L489.7 473.5 L500.8 465.6 L512.2 458.0 L523.8 450.9 L535.7 444.2 L547.8 437.9 L560.1 432.0 L572.6 426.5 L585.2 421.3 L597.9 416.6 L610.8 412.2 L623.7 408.1 L636.7 404.5 L649.9 401.1 L663.0 398.1 L676.2 395.4 L689.5 393.1 L702.8 391.1 L716.2 389.4 L729.5 388.0 L742.9 386.9 L756.3 386.2 L769.6 385.7 L783.0 385.6 L796.4 385.8 L809.7 386.2 L823.1 387.0 L836.4 388.1 L849.6 389.5 L862.9 391.2 L876.1 393.3 L889.2 395.7 L902.2 398.3 L915.2 401.4 L928.1 404.7 L940.9 408.4 L953.6 412.5 L966.2 416.9 L978.7 421.6 L991.0 426.7 L1003.1 432.2 L1015.1 438.1 L1026.8 444.4 L1038.3 451.1 L1049.6 458.2 L1060.5 465.7 L1071.2 473.6 L1081.5 482.0 L1091.4 490.8 L1100.9 500.0 L1109.9 509.8 L1118.4 519.9 L1126.3 530.5 L1133.6 541.6 L1140.2 553.2 L1146.0 565.2 L1151.1 577.6 L1155.3 590.5 L1158.5 603.8 L1160.7 617.5 L1161.8 631.6 L1161.7 646.1 L1160.3 660.8 L1157.6 675.8ZM1202.8 710.7 L1197.5 728.7 L1190.5 746.8 L1181.6 765.0 L1170.6 783.3 L1157.6 801.4 L1142.5 819.3 L1125.1 836.8 L1105.6 853.7 L1083.9 870.0 L1060.1 885.4 L1034.2 899.9 L1006.3 913.1 L976.6 925.0 L945.3 935.3 L912.5 944.1 L878.5 951.1 L843.7 956.2 L808.2 959.4 L772.4 960.6 L736.6 959.7 L701.2 956.9 L666.4 952.2 L632.5 945.5 L599.8 937.1 L568.6 927.0 L539.0 915.3 L511.3 902.3 L485.6 888.0 L462.0 872.7 L440.6 856.4 L421.4 839.5 L404.5 822.0 L389.7 804.1 L377.2 785.9 L366.7 767.6 L358.3 749.2 L351.8 731.0 L347.2 712.9 L344.3 695.1 L343.0 677.6 L343.3 660.5 L344.9 643.9 L347.9 627.7 L352.1 612.1 L357.3 597.0 L363.6 582.4 L370.8 568.4 L378.8 555.0 L387.5 542.1 L396.9 529.8 L406.9 518.1 L417.5 506.9 L428.5 496.2 L440.0 486.1 L451.8 476.6 L464.0 467.5 L476.5 458.9 L489.3 450.8 L502.3 443.2 L515.5 436.1 L528.9 429.4 L542.4 423.1 L556.1 417.3 L569.9 411.9 L583.8 406.9 L597.8 402.3 L611.9 398.0 L626.0 394.2 L640.2 390.7 L654.4 387.5 L668.6 384.7 L682.9 382.3 L697.2 380.2 L711.6 378.4 L725.9 377.0 L740.2 375.8 L754.6 375.1 L768.9 374.6 L783.2 374.4 L797.6 374.6 L811.9 375.1 L826.1 376.0 L840.4 377.1 L854.6 378.6 L868.9 380.4 L883.0 382.5 L897.1 385.0 L911.2 387.8 L925.2 391.0 L939.2 394.5 L953.1 398.4 L966.9 402.6 L980.6 407.2 L994.2 412.2 L1007.6 417.7 L1020.9 423.5 L1034.1 429.7 L1047.1 436.4 L1059.9 443.5 L1072.4 451.1 L1084.7 459.1 L1096.8 467.6 L1108.5 476.6 L1119.8 486.1 L1130.7 496.2 L1141.2 506.7 L1151.2 517.8 L1160.6 529.4 L1169.4 541.6 L1177.5 554.4 L1184.9 567.7 L1191.4 581.5 L1197.0 595.9 L1201.6 610.9 L1205.1 626.4 L1207.5 642.4 L1208.5 658.9 L1208.1 675.8 L1206.2 693.1ZM1254.9 731.6 L1250.5 752.4 L1244.0 773.5 L1235.3 794.9 L1224.3 816.4 L1210.9 838.0 L1194.9 859.4 L1176.2 880.4 L1154.9 901.0 L1131.0 920.8 L1104.3 939.7 L1075.0 957.5 L1043.3 973.8 L1009.2 988.6 L973.0 1001.6 L935.0 1012.5 L895.4 1021.3 L854.7 1027.8 L813.1 1031.8 L771.1 1033.3 L729.1 1032.3 L687.5 1028.8 L646.8 1022.8 L607.3 1014.5 L569.3 1003.9 L533.2 991.3 L499.3 976.8 L467.8 960.7 L438.8 943.1 L412.4 924.3 L388.7 904.5 L367.8 884.0 L349.6 862.9 L334.1 841.4 L321.2 819.8 L310.8 798.1 L302.7 776.5 L296.9 755.2 L293.2 734.2 L291.4 713.7 L291.5 693.6 L293.2 674.1 L296.4 655.3 L301.0 637.0 L306.8 619.5 L313.8 602.6 L321.9 586.5 L330.8 571.0 L340.6 556.2 L351.0 542.1 L362.2 528.7 L373.9 515.9 L386.1 503.8 L398.8 492.4 L411.8 481.5 L425.2 471.3 L438.9 461.6 L452.9 452.5 L467.1 443.9 L481.4 435.8 L496.0 428.3 L510.6 421.2 L525.4 414.7 L540.3 408.5 L555.3 402.9 L570.3 397.6 L585.4 392.8 L600.6 388.4 L615.7 384.3 L631.0 380.7 L646.2 377.4 L661.4 374.5 L676.7 372.0 L691.9 369.8 L707.2 368.0 L722.4 366.5 L737.7 365.4 L753.0 364.5 L768.2 364.1 L783.4 363.9 L798.6 364.1 L813.9 364.6 L829.0 365.5 L844.2 366.7 L859.4 368.2 L874.5 370.1 L889.6 372.3 L904.7 374.8 L919.8 377.8 L934.8 381.1 L949.7 384.7 L964.6 388.8 L979.5 393.2 L994.3 398.0 L1009.0 403.3 L1023.6 409.0 L1038.1 415.1 L1052.5 421.6 L1066.7 428.7 L1080.8 436.2 L1094.6 444.2 L1108.3 452.7 L1121.7 461.8 L1134.8 471.4 L1147.7 481.6 L1160.1 492.3 L1172.1 503.7 L1183.7 515.7 L1194.7 528.3 L1205.2 541.6 L1215.0 555.5 L1224.0 570.2 L1232.2 585.5 L1239.5 601.4 L1245.7 618.1 L1250.8 635.5 L1254.6 653.5 L1257.1 672.1 L1258.1 691.4 L1257.4 711.2ZM1310.1 753.6 L1306.8 777.6 L1301.3 802.1 L1293.3 827.1 L1282.6 852.5 L1269.1 878.0 L1252.5 903.5 L1232.8 928.8 L1209.9 953.6 L1183.7 977.8 L1154.2 1000.9 L1121.4 1022.8 L1085.5 1043.1 L1046.6 1061.5 L1005.0 1077.7 L961.0 1091.5 L915.0 1102.6 L867.4 1110.7 L818.7 1115.8 L769.5 1117.8 L720.3 1116.5 L671.7 1112.1 L624.1 1104.6 L578.1 1094.1 L534.2 1080.8 L492.7 1065.0 L454.0 1047.0 L418.3 1027.0 L385.8 1005.3 L356.6 982.3 L330.8 958.2 L308.3 933.4 L289.2 908.0 L273.2 882.3 L260.3 856.7 L250.3 831.1 L243.0 805.9 L238.3 781.1 L235.9 756.8 L235.7 733.3 L237.4 710.4 L240.9 688.3 L246.1 667.1 L252.6 646.7 L260.5 627.1 L269.5 608.4 L279.5 590.6 L290.4 573.6 L302.2 557.5 L314.6 542.1 L327.6 527.6 L341.1 513.9 L355.1 500.9 L369.5 488.6 L384.2 477.0 L399.2 466.1 L414.4 455.8 L429.9 446.2 L445.5 437.1 L461.2 428.7 L477.1 420.7 L493.0 413.4 L509.1 406.5 L525.1 400.1 L541.3 394.2 L557.4 388.7 L573.6 383.7 L589.8 379.1 L606.0 375.0 L622.2 371.2 L638.4 367.8 L654.5 364.9 L670.7 362.2 L686.9 360.0 L703.0 358.1 L719.2 356.6 L735.3 355.4 L751.4 354.6 L767.5 354.1 L783.6 353.9 L799.7 354.1 L815.7 354.7 L831.8 355.5 L847.8 356.8 L863.9 358.3 L879.9 360.3 L895.9 362.6 L911.9 365.2 L927.9 368.2 L943.8 371.6 L959.8 375.4 L975.7 379.6 L991.5 384.2 L1007.4 389.2 L1023.2 394.7 L1038.9 400.6 L1054.6 407.0 L1070.1 413.8 L1085.6 421.2 L1101.0 429.1 L1116.2 437.5 L1131.2 446.5 L1146.1 456.1 L1160.7 466.3 L1175.0 477.1 L1189.0 488.6 L1202.7 500.7 L1215.9 513.6 L1228.7 527.2 L1240.9 541.6 L1252.5 556.7 L1263.4 572.7 L1273.5 589.4 L1282.6 607.0 L1290.8 625.5 L1297.7 644.8 L1303.4 665.0 L1307.6 685.9 L1310.3 707.7 L1311.1 730.3Z"/></defs><use href="#rg" fill="none" stroke="#58585a" stroke-width="1.35" stroke-opacity=".8"/>
<clipPath id="cfront"><rect x="480" y="560" width="600" height="220"/></clipPath>
<g clip-path="url(#cfront)"><use href="#rg" fill="none" stroke="#58585a" stroke-width="1.9" stroke-opacity=".6"/></g>
<path d="M464.0 415.5L1351.4 770.1M966.6 369.1L285.2 1000.5" stroke="#58585a" stroke-width="1.5" stroke-opacity=".85"/>
<path d="M965.0 386.0 L992.0 387.6 L1010.5 397.3 L1010.5 409.5 L994.6 416.8 L975.0 424.0Z" fill="url(#rd)"/>
<path d="M878 314 L864 338 L913 352 L926 316 Z" fill="#58a84c"/>
<ellipse cx="902" cy="314.5" rx="24" ry="8.2" fill="#7ab83c" transform="rotate(3 902 314.5)"/>
<ellipse cx="902" cy="314.8" rx="19" ry="5.6" fill="#d03a10" transform="rotate(3 902 314.8)"/>
<ellipse cx="902" cy="315" rx="12" ry="3" fill="#e06a30" transform="rotate(3 902 315)"/>
<clipPath id="cbase"><rect x="480" y="575" width="600" height="200"/></clipPath><g clip-path="url(#cbase)">
<ellipse cx="767" cy="580" rx="158" ry="100.5" fill="#0a2fb4"/>
<ellipse cx="767" cy="579.5" rx="153.5" ry="97.5" fill="none" stroke="#b8c4e6" stroke-width=".8"/>
<ellipse cx="767" cy="579" rx="148.5" ry="94" fill="none" stroke="#b8c4e6" stroke-width=".8"/>
<ellipse cx="767" cy="578" rx="143" ry="90" fill="#0c9a14"/></g>
<path d="M572.0 506.0 C569.0 504.5 567.2 508.7 566.0 511.0 C564.8 513.3 564.5 517.3 565.0 520.0 C565.5 522.7 566.5 525.5 569.0 527.0 C571.5 528.5 577.5 530.2 580.0 529.0 C582.5 527.8 585.3 523.8 584.0 520.0 C582.7 516.2 575.0 507.5 572.0 506.0Z" fill="#d81606"/>
<path d="M558.3 414.0 C557.8 421.1 558.5 432.3 559.0 440.0 C559.5 447.7 560.3 453.3 561.0 460.0 C561.7 466.7 561.7 472.5 563.0 480.0 C564.3 487.5 566.3 497.3 569.0 505.0 C571.7 512.7 574.8 518.2 579.0 526.0 C583.2 533.8 588.8 544.2 594.0 552.0 C599.2 559.8 604.2 565.5 610.0 573.0 C615.8 580.5 619.8 588.0 629.0 597.0 C638.2 606.0 651.5 619.2 665.0 627.0 C678.5 634.8 694.5 639.8 710.0 643.5 C725.5 647.2 743.0 649.0 758.0 649.5 C773.0 650.0 785.5 649.0 800.0 646.5 C814.5 644.0 831.0 639.8 845.0 634.5 C859.0 629.2 874.0 621.8 884.0 615.0 C894.0 608.2 898.7 600.7 905.0 594.0 C911.3 587.3 916.7 580.3 922.0 575.0 C927.3 569.7 932.0 568.3 937.0 562.0 C942.0 555.7 947.7 544.8 952.0 537.0 C956.3 529.2 959.8 522.0 963.0 515.0 C966.2 508.0 968.7 502.5 971.0 495.0 C973.3 487.5 975.6 478.2 977.0 470.0 C978.4 461.8 979.2 454.7 979.5 446.0 C979.8 437.3 979.8 425.7 979.0 418.0 C978.2 410.3 977.3 405.5 975.0 400.0 C972.7 394.5 969.4 389.9 965.4 385.0 C961.4 380.1 957.2 375.4 950.7 370.5 C944.2 365.6 934.4 360.1 926.3 355.9 C918.2 351.6 912.1 348.6 902.0 345.0 C891.9 341.4 877.6 337.1 865.4 334.0 C853.2 330.9 843.0 328.6 828.8 326.6 C814.6 324.6 795.6 322.7 780.0 322.0 C764.4 321.3 751.4 321.4 735.0 322.4 C718.6 323.4 697.7 325.0 681.5 328.0 C665.3 331.0 651.9 335.1 637.6 340.2 C623.4 345.3 607.0 352.2 596.0 358.5 C585.0 364.8 577.4 371.5 571.7 378.0 C566.0 384.5 564.2 391.6 562.0 397.6 C559.8 403.6 558.8 406.9 558.3 414.0Z" fill="#10d06c"/>
<path d="M558.3 414.0 C557.8 421.1 558.5 432.3 559.0 440.0 C559.5 447.7 560.3 453.3 561.0 460.0 C561.7 466.7 561.7 472.5 563.0 480.0 C564.3 487.5 566.3 497.3 569.0 505.0 C571.7 512.7 574.8 518.2 579.0 526.0 C583.2 533.8 588.8 544.2 594.0 552.0 C599.2 559.8 604.2 565.5 610.0 573.0 C615.8 580.5 619.8 588.0 629.0 597.0 C638.2 606.0 651.5 619.2 665.0 627.0 C678.5 634.8 694.5 639.8 710.0 643.5 C725.5 647.2 743.0 649.0 758.0 649.5 C773.0 650.0 785.5 649.0 800.0 646.5 C814.5 644.0 831.0 639.8 845.0 634.5 C859.0 629.2 874.0 621.8 884.0 615.0 C894.0 608.2 898.7 600.7 905.0 594.0 C911.3 587.3 916.7 580.3 922.0 575.0 C927.3 569.7 932.0 568.3 937.0 562.0 C942.0 555.7 947.7 544.8 952.0 537.0 C956.3 529.2 959.8 522.0 963.0 515.0 C966.2 508.0 968.7 502.5 971.0 495.0 C973.3 487.5 975.6 478.2 977.0 470.0 C978.4 461.8 979.2 454.7 979.5 446.0 C979.8 437.3 979.8 425.7 979.0 418.0 C978.2 410.3 977.3 405.5 975.0 400.0 C972.7 394.5 969.4 389.9 965.4 385.0 C961.4 380.1 957.2 375.4 950.7 370.5 C944.2 365.6 934.4 360.1 926.3 355.9 C918.2 351.6 912.1 348.6 902.0 345.0 C891.9 341.4 877.6 337.1 865.4 334.0 C853.2 330.9 843.0 328.6 828.8 326.6 C814.6 324.6 795.6 322.7 780.0 322.0 C764.4 321.3 751.4 321.4 735.0 322.4 C718.6 323.4 697.7 325.0 681.5 328.0 C665.3 331.0 651.9 335.1 637.6 340.2 C623.4 345.3 607.0 352.2 596.0 358.5 C585.0 364.8 577.4 371.5 571.7 378.0 C566.0 384.5 564.2 391.6 562.0 397.6 C559.8 403.6 558.8 406.9 558.3 414.0Z" fill="url(#gb)" opacity=".7"/>
<path d="M558.3 414.0 C557.8 421.1 558.5 432.3 559.0 440.0 C559.5 447.7 560.3 453.3 561.0 460.0 C561.7 466.7 561.7 472.5 563.0 480.0 C564.3 487.5 566.3 497.3 569.0 505.0 C571.7 512.7 574.8 518.2 579.0 526.0 C583.2 533.8 588.8 544.2 594.0 552.0 C599.2 559.8 604.2 565.5 610.0 573.0 C615.8 580.5 619.8 588.0 629.0 597.0 C638.2 606.0 651.5 619.2 665.0 627.0 C678.5 634.8 694.5 639.8 710.0 643.5 C725.5 647.2 743.0 649.0 758.0 649.5 C773.0 650.0 785.5 649.0 800.0 646.5 C814.5 644.0 831.0 639.8 845.0 634.5 C859.0 629.2 874.0 621.8 884.0 615.0 C894.0 608.2 898.7 600.7 905.0 594.0 C911.3 587.3 916.7 580.3 922.0 575.0 C927.3 569.7 932.0 568.3 937.0 562.0 C942.0 555.7 947.7 544.8 952.0 537.0 C956.3 529.2 959.8 522.0 963.0 515.0 C966.2 508.0 968.7 502.5 971.0 495.0 C973.3 487.5 975.6 478.2 977.0 470.0 C978.4 461.8 979.2 454.7 979.5 446.0 C979.8 437.3 979.8 425.7 979.0 418.0 C978.2 410.3 977.3 405.5 975.0 400.0 C972.7 394.5 969.4 389.9 965.4 385.0 C961.4 380.1 957.2 375.4 950.7 370.5 C944.2 365.6 934.4 360.1 926.3 355.9 C918.2 351.6 912.1 348.6 902.0 345.0 C891.9 341.4 877.6 337.1 865.4 334.0 C853.2 330.9 843.0 328.6 828.8 326.6 C814.6 324.6 795.6 322.7 780.0 322.0 C764.4 321.3 751.4 321.4 735.0 322.4 C718.6 323.4 697.7 325.0 681.5 328.0 C665.3 331.0 651.9 335.1 637.6 340.2 C623.4 345.3 607.0 352.2 596.0 358.5 C585.0 364.8 577.4 371.5 571.7 378.0 C566.0 384.5 564.2 391.6 562.0 397.6 C559.8 403.6 558.8 406.9 558.3 414.0Z" fill="url(#shadeL)"/>
<g clip-path="url(#cbody)">
<path d="M584.0 459.0 L578.0 468.0 L580.0 476.0 L588.0 483.0 L622.0 488.0 L636.0 483.0 L610.0 470.0Z" fill="#cc1505"/>
<path d="M608.0 565.5 L614.0 574.5 L632.0 576.5 L621.0 568.5Z" fill="#cc1505"/>
<path d="M657.5 556.5 L665.0 568.5 L692.0 576.0 L710.0 568.5 L680.0 562.5Z" fill="#cc1505"/>
<path d="M734.0 606.0 L746.0 615.0 L767.0 621.0 L786.5 613.5 L788.0 607.5 L758.0 606.6Z" fill="#cc1505"/>
<path d="M656.0 617.4 L665.0 624.0 L671.0 622.5 L662.0 618.5Z" fill="#cc1505"/>
<path d="M853.0 546.8 L880.6 537.6 L903.5 534.6 L902.0 546.8 L886.7 554.4 L871.5 554.0Z" fill="#cc1505"/>
<path d="M856.0 621.5 L883.7 607.7 L885.0 614.5 L874.5 622.0Z" fill="#cc1505"/>
<path d="M690.0 480.0 L697.0 487.0 L706.0 500.0 L721.0 508.0 L777.0 518.0 L813.0 508.0 L824.0 493.0 L830.0 482.0 L780.0 470.0Z" fill="url(#rd2)"/>
</g>
<path d="M924.0 490.0 L950.0 477.0 L968.0 455.0 L978.5 447.3 L997.5 461.0 L997.5 481.0 L968.0 494.0Z" fill="url(#rd)"/>
<path d="M960.0 508.0 L971.0 494.0 L979.4 492.0 L979.5 501.0 L966.0 508.5Z" fill="#c01002"/>
<path d="M925.0 557.0 L953.8 536.0 L960.0 540.7 L957.5 550.0 L938.5 559.5Z" fill="#c81404"/>
<path d="M925.0 576.0 L944.6 557.0 L950.7 559.0 L949.5 569.0 L935.5 576.0Z" fill="#c01002"/>
<path d="M900.0 589.0 L918.7 580.0 L918.0 583.0 L905.0 590.0Z" fill="#c81404"/>
<path d="M559.5 417.0 C558.3 411.0 560.8 404.3 563.0 398.0 C565.2 391.7 567.3 385.3 573.0 379.0 C578.7 372.7 586.2 366.2 597.0 360.0 C607.8 353.8 623.8 346.8 638.0 341.7 C652.2 336.6 665.8 332.4 682.0 329.5 C698.2 326.6 718.7 325.0 735.0 324.0 C751.3 323.0 764.5 322.8 780.0 323.5 C795.5 324.2 813.8 326.0 828.0 328.0 C842.2 330.0 852.8 332.3 865.0 335.5 C877.2 338.7 891.0 343.2 901.0 347.0 C911.0 350.8 917.2 354.2 925.0 358.5 C932.8 362.8 941.8 368.2 948.0 373.0 C954.2 377.8 958.2 382.5 962.0 387.0 C965.8 391.5 968.9 396.2 971.0 400.0 C973.1 403.8 974.2 406.7 974.5 410.0 C974.8 413.3 973.9 416.7 972.5 420.0 C971.1 423.3 969.1 426.7 966.0 430.0 C962.9 433.3 958.3 437.0 954.0 440.0 C949.7 443.0 947.3 444.0 940.0 448.0 C932.7 452.0 921.7 459.0 910.0 464.0 C898.3 469.0 883.3 474.3 870.0 478.0 C856.7 481.7 843.3 483.8 830.0 486.0 C816.7 488.2 800.0 490.4 790.0 491.0 C780.0 491.6 780.0 490.0 770.0 489.5 C760.0 489.0 743.3 489.2 730.0 488.0 C716.7 486.8 703.3 484.3 690.0 482.0 C676.7 479.7 661.7 477.0 650.0 474.0 C638.3 471.0 630.0 468.0 620.0 464.0 C610.0 460.0 598.3 455.0 590.0 450.0 C581.7 445.0 575.1 439.5 570.0 434.0 C564.9 428.5 560.7 423.0 559.5 417.0Z" fill="#c9bd00"/>
<path d="M592.0 449.0 C590.0 446.5 583.3 439.3 580.0 434.0 C576.7 428.7 573.6 422.7 572.0 417.0 C570.4 411.3 570.0 405.5 570.5 400.0 C571.0 394.5 572.6 388.8 575.0 384.0 C577.4 379.2 580.8 375.0 585.0 371.0 C589.2 367.0 594.2 363.3 600.0 360.0 C605.8 356.7 616.7 352.5 620.0 351.0" fill="none" stroke="#d8380c" stroke-width="6.5" stroke-linecap="round" stroke-dasharray="10 3 6 2.5 14 4 4 5 9 2"/>
<path d="M566.0 432.0 C565.3 429.2 562.3 420.7 562.0 415.0 C561.7 409.3 562.3 403.8 564.0 398.0 C565.7 392.2 568.0 385.5 572.0 380.0 C576.0 374.5 585.3 367.5 588.0 365.0" fill="none" stroke="#a89a00" stroke-width="3.2"/>
<path d="M948.0 438.0 C950.0 435.8 956.8 429.7 960.0 425.0 C963.2 420.3 966.4 414.8 967.5 410.0 C968.6 405.2 968.1 400.8 966.5 396.0 C964.9 391.2 961.8 385.7 958.0 381.0 C954.2 376.3 949.2 371.8 944.0 368.0 C938.8 364.2 933.0 361.0 927.0 358.0 C921.0 355.0 915.8 353.0 908.0 350.0 C900.2 347.0 884.7 341.7 880.0 340.0" fill="none" stroke="#d8440c" stroke-width="4.6" stroke-linecap="round" stroke-dasharray="7 3 12 2 5 4 9 2"/>
<path d="M599.8 449.5 L593.4 445.7 L601.6 445.0ZM613.1 449.8 L613.7 455.0 L607.3 454.6ZM621.6 461.6 L619.1 457.7 L623.8 457.0ZM633.7 461.2 L640.2 462.2 L634.5 466.9ZM652.0 470.0 L655.7 468.5 L655.6 472.2ZM667.7 477.3 L668.4 471.8 L673.8 473.7ZM683.6 477.2 L688.4 477.6 L686.8 480.1ZM700.0 479.5 L706.5 480.5 L700.8 484.3ZM809.8 483.0 L811.4 479.6 L814.4 482.8ZM841.4 478.4 L845.7 476.5 L843.8 481.1ZM872.6 474.1 L869.4 471.8 L874.6 471.4ZM905.6 462.2 L902.5 464.8 L900.5 459.7ZM916.9 454.1 L920.7 450.7 L923.0 454.0ZM936.8 447.8 L930.3 446.7 L933.9 442.0Z" fill="#d63c0a"/>
<path d="M706 483.5 Q760 488 806 484.5" fill="none" stroke="#c02c08" stroke-width="2.6" stroke-dasharray="5 2 9 3 3 2 14 2 2 3"/>
<path d="M716 486.5 Q760 490.5 800 487.5" fill="none" stroke="#d8c814" stroke-width="1.2" stroke-dasharray="3 4 8 3 2 5"/>
<path d="M637 339.8h6" stroke="#d6480a" stroke-width="1.6"/>
<path d="M687 327.8h6" stroke="#d6480a" stroke-width="1.6"/>
<path d="M727 323.6h6" stroke="#d6480a" stroke-width="1.6"/>
<path d="M797 324.6h6" stroke="#d6480a" stroke-width="1.6"/>
<path d="M847 331.8h6" stroke="#d6480a" stroke-width="1.6"/>
<path d="M576.0 412.0 C574.0 405.7 576.6 402.8 577.8 398.0 C579.0 393.2 577.9 389.2 583.0 383.0 C588.1 376.8 597.2 367.7 608.3 361.0 C619.4 354.3 632.7 348.0 649.8 342.7 C666.9 337.4 689.0 332.2 710.7 329.3 C732.4 326.4 760.1 324.8 780.0 325.0 C799.9 325.2 815.3 328.1 830.0 330.5 C844.7 332.9 855.5 335.7 868.0 339.5 C880.5 343.3 895.3 349.5 905.0 353.5 C914.7 357.5 919.5 359.6 926.0 363.5 C932.5 367.4 939.0 372.4 944.0 377.0 C949.0 381.6 953.1 386.2 956.0 391.0 C958.9 395.8 961.2 401.2 961.5 406.0 C961.8 410.8 959.9 416.3 958.0 420.0 C956.1 423.7 954.7 424.0 950.0 428.0 C945.3 432.0 938.3 439.0 930.0 444.0 C921.7 449.0 911.7 453.7 900.0 458.0 C888.3 462.3 873.3 466.8 860.0 470.0 C846.7 473.2 831.7 475.5 820.0 477.0 C808.3 478.5 801.7 478.4 790.0 479.0 C778.3 479.6 765.0 481.0 750.0 480.5 C735.0 480.0 713.3 477.8 700.0 476.0 C686.7 474.2 680.0 472.5 670.0 470.0 C660.0 467.5 650.0 464.7 640.0 461.0 C630.0 457.3 618.3 452.2 610.0 448.0 C601.7 443.8 595.7 442.0 590.0 436.0 C584.3 430.0 578.0 418.3 576.0 412.0Z" fill="#28c25e"/>
<path d="M576.0 412.0 C574.0 405.7 576.6 402.8 577.8 398.0 C579.0 393.2 577.9 389.2 583.0 383.0 C588.1 376.8 597.2 367.7 608.3 361.0 C619.4 354.3 632.7 348.0 649.8 342.7 C666.9 337.4 689.0 332.2 710.7 329.3 C732.4 326.4 760.1 324.8 780.0 325.0 C799.9 325.2 815.3 328.1 830.0 330.5 C844.7 332.9 855.5 335.7 868.0 339.5 C880.5 343.3 895.3 349.5 905.0 353.5 C914.7 357.5 919.5 359.6 926.0 363.5 C932.5 367.4 939.0 372.4 944.0 377.0 C949.0 381.6 953.1 386.2 956.0 391.0 C958.9 395.8 961.2 401.2 961.5 406.0 C961.8 410.8 959.9 416.3 958.0 420.0 C956.1 423.7 954.7 424.0 950.0 428.0 C945.3 432.0 938.3 439.0 930.0 444.0 C921.7 449.0 911.7 453.7 900.0 458.0 C888.3 462.3 873.3 466.8 860.0 470.0 C846.7 473.2 831.7 475.5 820.0 477.0 C808.3 478.5 801.7 478.4 790.0 479.0 C778.3 479.6 765.0 481.0 750.0 480.5 C735.0 480.0 713.3 477.8 700.0 476.0 C686.7 474.2 680.0 472.5 670.0 470.0 C660.0 467.5 650.0 464.7 640.0 461.0 C630.0 457.3 618.3 452.2 610.0 448.0 C601.7 443.8 595.7 442.0 590.0 436.0 C584.3 430.0 578.0 418.3 576.0 412.0Z" fill="url(#gi)" opacity=".6"/>
<path d="M576.0 412.0 C574.0 405.7 576.6 402.8 577.8 398.0 C579.0 393.2 577.9 389.2 583.0 383.0 C588.1 376.8 597.2 367.7 608.3 361.0 C619.4 354.3 632.7 348.0 649.8 342.7 C666.9 337.4 689.0 332.2 710.7 329.3 C732.4 326.4 760.1 324.8 780.0 325.0 C799.9 325.2 815.3 328.1 830.0 330.5 C844.7 332.9 855.5 335.7 868.0 339.5 C880.5 343.3 895.3 349.5 905.0 353.5 C914.7 357.5 919.5 359.6 926.0 363.5 C932.5 367.4 939.0 372.4 944.0 377.0 C949.0 381.6 953.1 386.2 956.0 391.0 C958.9 395.8 961.2 401.2 961.5 406.0 C961.8 410.8 959.9 416.3 958.0 420.0 C956.1 423.7 954.7 424.0 950.0 428.0 C945.3 432.0 938.3 439.0 930.0 444.0 C921.7 449.0 911.7 453.7 900.0 458.0 C888.3 462.3 873.3 466.8 860.0 470.0 C846.7 473.2 831.7 475.5 820.0 477.0 C808.3 478.5 801.7 478.4 790.0 479.0 C778.3 479.6 765.0 481.0 750.0 480.5 C735.0 480.0 713.3 477.8 700.0 476.0 C686.7 474.2 680.0 472.5 670.0 470.0 C660.0 467.5 650.0 464.7 640.0 461.0 C630.0 457.3 618.3 452.2 610.0 448.0 C601.7 443.8 595.7 442.0 590.0 436.0 C584.3 430.0 578.0 418.3 576.0 412.0Z" fill="url(#shadeI)"/>
<g clip-path="url(#cint)"><rect x="560" y="320" width="420" height="175" filter="url(#spk)" opacity=".5"/><rect x="560" y="320" width="420" height="175" filter="url(#spk2)" opacity=".5"/></g>
<g clip-path="url(#cint)">
<path d="M679 387 Q692 381 703.5 383 Q693 388.5 679 387Z" fill="#cc1505"/>
<path d="M701 390 Q718 384.5 737 385.5 Q722 393.5 707 393 Z" fill="#cc1505"/>
<path d="M676.5 399 Q690 394 709.5 394 Q697 401.5 676.5 399Z" fill="#cc1505"/>
<path d="M700.0 490.0 L702.0 473.0 L712.0 463.0 L730.0 457.0 L750.0 454.0 L775.0 456.0 L795.0 460.0 L822.0 478.0 L822.0 495.0Z" fill="url(#rd2)"/>
<path d="M615.0 449.0 L632.0 447.0 L645.0 450.0 L660.0 457.0 L668.0 466.0 L668.0 475.0 L615.0 460.0Z" fill="url(#rd2)"/>
<path d="M914.0 399.8 L915.4 390.0 L938.5 383.9 L948.0 390.0 L956.0 402.0 L970.0 410.0 L965.0 425.0 L955.6 420.5 L936.0 416.8 L921.5 407.0Z" fill="url(#rd2)"/>
<path d="M886.0 466.0 L892.0 451.0 L922.0 440.0 L945.0 439.0 L940.0 452.0 L900.0 466.0Z" fill="url(#rd2)"/>
</g>
</svg>
</div>
<div class="abs" style="left:1073px;top:773.5px;width:119px;height:1px;background:#f0f0f0"></div>

<!-- toolbar -->
<div class="abs" style="left:491px;top:84px;width:125px;height:30px;background:#8b8b8b"></div>
<svg class="abs" style="left:491px;top:84px" width="125" height="30" viewBox="0 0 125 30">
<path d="M17.3 4.4L6.2 15.7H10.75V25.2H16.5V19.5H20.4V25.2H25.4V15.7H29.9L25.8 11.7V4.8H22.5V8.4Z" fill="#fff"/>
<path d="M46.60 8.37A7.2 7.2 0 0 0 46.26 21.58" fill="none" stroke="#fff" stroke-width="3"/><path d="M50.43 23.52L44.74 24.84L47.78 18.31Z" fill="#fff"/>
<path d="M52.00 21.73A7.2 7.2 0 0 0 52.34 8.52" fill="none" stroke="#fff" stroke-width="3"/><path d="M48.17 6.58L53.86 5.26L50.82 11.79Z" fill="#fff"/>
<rect x="67.9" y="2.7" width="24.2" height="24.3" fill="none" stroke="#ececec" stroke-width="1.1"/>
<path d="M79.8 7V23M72 15.05H88" stroke="#fff" stroke-width="1.6"/><path d="M79.8 4.4L82.5 8.6H77.1ZM79.8 25.7L82.5 21.5H77.1ZM68.9 15.05L73.1 12.4V17.7ZM90.7 15.05L86.5 12.4V17.7Z" fill="#fff"/>
<path d="M102.8 7.7Q109.6 5.6 116.4 7.7L116.2 9.5Q113.2 10 112.7 12.2L113 17.6L119.8 18.3L109.8 24.8L99.8 18.3L106.6 17.6L106.9 12.2Q106.4 10 103 9.5Z" fill="#fff"/>
</svg>
<!-- legend -->
<div class="abs" style="left:491px;top:118.8px;width:77px;height:133.2px;background:#8b8b8b;box-shadow:inset 0 0 0 1px #7e7e7e">
<div class="lg" style="top:2.45px;background:#0038ff"></div><div class="lgt" style="top:4.30px">15 mm/s</div>
<div class="lg" style="top:21.45px;background:#0a9bff"></div><div class="lgt" style="top:23.30px">20 mm/s</div>
<div class="lg" style="top:40.45px;background:#00eaff"></div><div class="lgt" style="top:42.30px">26 mm/s</div>
<div class="lg" style="top:59.45px;background:#14f014"></div><div class="lgt" style="top:61.30px">32 mm/s</div>
<div class="lg" style="top:78.45px;background:#c8f80a"></div><div class="lgt" style="top:80.30px">38 mm/s</div>
<div class="lg" style="top:97.45px;background:#ff9a00"></div><div class="lgt" style="top:99.30px">44 mm/s</div>
<div class="lg" style="top:116.45px;background:#ff1a00"></div><div class="lgt" style="top:118.30px">50 mm/s</div>
</div>
<!-- 2D/3D -->
<div class="abs" style="left:973px;top:84px;width:60px;height:30px;background:#8b8b8b"></div>
<div class="t" style="left:977.3px;top:90.8px;font-size:16px;color:#fff">2D</div>
<div class="abs" style="left:1005px;top:86px;width:26px;height:26px;border:1px solid #f0f0f0"></div>
<div class="t" style="left:1007.8px;top:90.8px;font-size:16px;color:#fff">3D</div>

<!-- sliders -->
<div class="abs" style="left:1053.2px;top:124px;width:7.6px;height:631px;background:#dfdfdf"></div>
<div class="abs" style="left:1051px;top:447.3px;width:11.4px;height:8.4px;background:#0a4180"></div>
<div class="abs" style="left:537px;top:751.9px;width:500px;height:7.9px;background:#dfdfdf"></div>
<div class="abs" style="left:533.7px;top:750.4px;width:8.8px;height:11px;background:#0a4180"></div>
<div class="abs" style="left:1033.2px;top:750.4px;width:7.6px;height:11px;background:#0a4180"></div>

<div class="abs" style="left:5.6px;top:23px;width:.9px;height:791px;background:#e8e8e8"></div>
<!-- right side panel -->
<div class="abs" style="left:1193.6px;top:23px;width:.9px;height:791px;background:#e6e6e6"></div><div class="abs" style="left:6px;top:813.1px;width:1188.4px;height:.9px;background:#ececec"></div>
<div class="abs" style="left:1078px;top:119px;width:108px;height:30px;background:#dddddd"></div>
<svg class="abs" style="left:1084px;top:95px" width="10" height="12" viewBox="0 0 10 12"><path d="M2 1.3L7.3 6L2 10.7" fill="none" stroke="#111" stroke-width="3"/></svg>
<div class="t" style="left:1107px;top:94.9px;font-size:12.7px;color:#222">MODEL</div>
<svg class="abs" style="left:1088px;top:129px" width="13" height="10" viewBox="0 0 13 10"><path d="M1.5 2L6.5 7L11.5 2" fill="none" stroke="#111" stroke-width="3"/></svg>
<div class="t" style="left:1107px;top:128.1px;font-size:12.9px;color:#222">DISPLAY</div>
<div class="box" style="left:1083px;top:158.0px"><svg style="position:absolute;left:0;top:0" width="6" height="6" viewBox="0 0 6 6"><path d="M0 0L6 6M6 0L0 6" stroke="#222" stroke-width="1.1"/></svg></div><div class="cb" style="left:1098px;top:155.9px">Print Bed</div>
<div class="box" style="left:1083px;top:171.5px"></div><div class="cb" style="left:1098px;top:169.4px">Moves</div>
<div class="box" style="left:1083px;top:185.0px"></div><div class="cb" style="left:1098px;top:182.9px">Retractions</div>
<div class="box" style="left:1083px;top:198.5px"><svg style="position:absolute;left:0;top:0" width="6" height="6" viewBox="0 0 6 6"><path d="M0 0L6 6M6 0L0 6" stroke="#222" stroke-width="1.1"/></svg></div><div class="cb" style="left:1098px;top:196.4px">Speeds</div>
<div class="box" style="left:1083px;top:212.0px"><svg style="position:absolute;left:0;top:0" width="6" height="6" viewBox="0 0 6 6"><path d="M0 0L6 6M6 0L0 6" stroke="#222" stroke-width="1.1"/></svg></div><div class="cb" style="left:1098px;top:209.9px">Extrusion</div>
<div class="box" style="left:1091px;top:225.5px"></div><div class="cb" style="left:1106px;top:223.4px">Transparent</div>
<div class="box" style="left:1083px;top:239.0px"></div><div class="cb" style="left:1098px;top:236.9px">Sync To Print</div>

<!-- bottom bar -->
<div class="t" style="left:493.6px;top:787.5px;font-size:12.8px;color:#222">&lt;&lt;</div>
<div class="t" style="left:517.5px;top:787.5px;font-size:12.8px;color:#222">247 / 512</div>
<div class="t" style="left:579.3px;top:787.5px;font-size:12.8px;color:#222">&gt;&gt;</div>
<div class="abs" style="left:618.8px;top:786.6px;width:31.8px;height:13.2px;background:#fff"></div>
<div class="t" style="left:620.2px;top:787.5px;font-size:12.8px;color:#111">247</div>
<div class="t" style="left:659.2px;top:787.5px;font-size:12.8px;color:#222">Go</div>
</div></body></html>
